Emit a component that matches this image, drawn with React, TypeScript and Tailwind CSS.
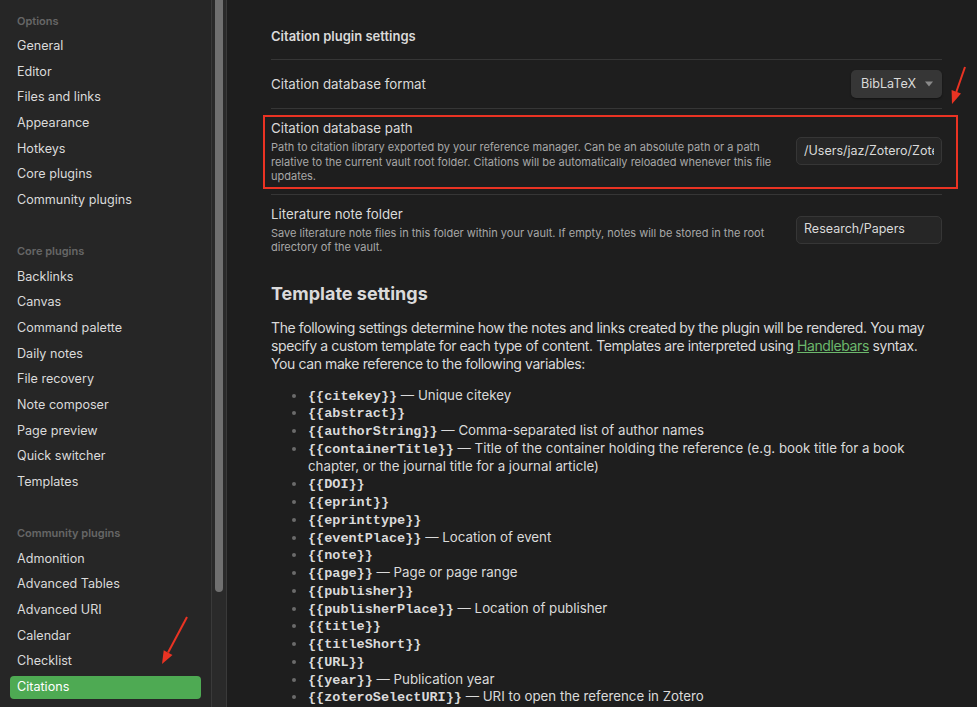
import React from "react";

const font = "font-['Inter','Noto_Sans',sans-serif]";

const sections = [
  {
    title: "Options",
    items: ["General", "Editor", "Files and links", "Appearance", "Hotkeys", "Core plugins", "Community plugins"],
  },
  {
    title: "Core plugins",
    items: ["Backlinks", "Canvas", "Command palette", "Daily notes", "File recovery", "Note composer", "Page preview", "Quick switcher", "Templates"],
  },
  {
    title: "Community plugins",
    items: ["Admonition", "Advanced Tables", "Advanced URI", "Calendar", "Checklist", "Citations"],
  },
];

const variables: [string, string?][] = [
  ["citekey", "Unique citekey"],
  ["abstract"],
  ["authorString", "Comma-separated list of author names"],
  ["containerTitle", "Title of the container holding the reference (e.g. book title for a book chapter, or the journal title for a journal article)"],
  ["DOI"],
  ["eprint"],
  ["eprinttype"],
  ["eventPlace", "Location of event"],
  ["note"],
  ["page", "Page or page range"],
  ["publisher"],
  ["publisherPlace", "Location of publisher"],
  ["title"],
  ["titleShort"],
  ["URL"],
  ["year", "Publication year"],
  ["zoteroSelectURI", "URI to open the reference in Zotero"],
];

function Sidebar() {
  return (
    <div className="w-[211px] shrink-0 bg-[#262626] px-[10px] pt-[8px]">
      {sections.map((section, i) => (
        <div key={section.title} className={i > 0 ? "mt-[25.65px]" : ""}>
          <div className="h-[25.65px] flex items-center pl-[7px] text-[11px] font-semibold text-[#666666]">
            {section.title}
          </div>
          {section.items.map((item) => (
            <div key={item} className="h-[25.65px] py-[1.3px]">
              <div
                className={
                  item === "Citations"
                    ? "h-full flex items-center pl-[7px] rounded-[4px] bg-[#4eaa53] text-white text-[12.6px]"
                    : "h-full flex items-center pl-[7px] text-[12.6px] text-[#dadada]"
                }
              >
                {item}
              </div>
            </div>
          ))}
        </div>
      ))}
    </div>
  );
}

function Scrollbar() {
  return (
    <div className="w-[16px] shrink-0 bg-[#2a2a2a] border-l border-r border-[#3a3a3a] mr-[1px]">
      <div className="ml-[3px] w-[8px] h-[592px] rounded-b-full bg-[#707070]" />
    </div>
  );
}

function SettingRow({
  title,
  desc,
  children,
  border = true,
}: {
  title: string;
  desc?: string;
  children: React.ReactNode;
  border?: boolean;
}) {
  return (
    <div className={`flex items-center py-[10px] ${border ? "border-b border-[#363636]" : ""}`}>
      <div className="flex-1 pr-[24px]">
        <div className="text-[13.3px] leading-[18px] text-[#dadada]">{title}</div>
        {desc && (
          <div className="mt-[3px] text-[11px] leading-[14.5px] text-[#a8a8a8]">{desc}</div>
        )}
      </div>
      {children}
    </div>
  );
}

function TextInput({ value }: { value: string }) {
  return (
    <div className="w-[146px] h-[28px] shrink-0 flex items-center px-[7px] rounded-[5px] bg-[#262626] border border-[#363636] text-[12.5px] text-[#dadada]">
      <span className="block w-full whitespace-nowrap overflow-hidden">{value}</span>
    </div>
  );
}

export default function App() {
  return (
    <div className={`relative w-[977px] h-[707px] flex overflow-hidden bg-[#1e1e1e] ${font}`}>
      <Sidebar />
      <Scrollbar />

      <div className="flex-1 pl-[43px] pr-[35px]">
        <div className="pt-[27px] pb-[14px] leading-[18px] text-[13px] font-semibold text-[#dadada] border-b border-[#363636]">
          Citation plugin settings
        </div>

        <SettingRow title="Citation database format">
          <div className="w-[91px] h-[28px] shrink-0 flex items-center justify-between pl-[10px] pr-[8px] rounded-[5px] bg-[#363636] shadow-[0_1px_2px_rgba(0,0,0,0.4)] text-[12.6px] text-[#dadada]">
            BibLaTeX
            <svg width="10" height="6" viewBox="0 0 10 6">
              <path d="M1 0.5 L9 0.5 L5 5.5 Z" fill="#8a8a8a" />
            </svg>
          </div>
        </SettingRow>

        <SettingRow
          title="Citation database path"
          desc="Path to citation library exported by your reference manager. Can be an absolute path or a path relative to the current vault root folder. Citations will be automatically reloaded whenever this file updates."
        >
          <TextInput value="/Users/jaz/Zotero/Zotero.bib" />
        </SettingRow>

        <SettingRow
          title="Literature note folder"
          desc="Save literature note files in this folder within your vault. If empty, notes will be stored in the root directory of the vault."
          border={false}
        >
          <TextInput value="Research/Papers" />
        </SettingRow>

        <h2 className="mt-[17px] text-[18px] leading-[24px] font-bold text-[#dadada]">
          Template settings
        </h2>

        <p className="mt-[13px] text-[14px] tracking-[-0.4px] leading-[18px] text-[#dadada]">
          The following settings determine how the notes and links created by the plugin will be rendered. You may
          specify a custom template for each type of content. Templates are interpreted using{" "}
          <span className="text-[#6cb86c] underline">Handlebars</span> syntax. You can make reference to the
          following variables:
        </p>

        <ul className="mt-[14px] pl-[21px]">
          {variables.map(([name, desc]) => (
            <li key={name} className="flex text-[13.3px] leading-[17.75px] text-[#dadada]">
              <span className="w-[16px] shrink-0 flex items-start pt-[7px]">
                <span className="w-[4px] h-[4px] rounded-full bg-[#6b6b6b]" />
              </span>
              <span>
                <code className="font-['Liberation_Mono',monospace] font-bold text-[13.5px] leading-none">
                  {"{{" + name + "}}"}
                </code>
                {desc && <> — {desc}</>}
              </span>
            </li>
          ))}
        </ul>
      </div>

      <div className="absolute left-[263px] top-[115px] w-[695px] h-[74px] border-2 border-[#ea3323] pointer-events-none" />

      <svg className="absolute inset-0 pointer-events-none" width="977" height="707" viewBox="0 0 977 707">
        <line x1="965" y1="67" x2="956.3" y2="92" stroke="#ea3323" strokeWidth="2" />
        <polygon points="952,104 961,93.5 951.6,90.1" fill="#ea3323" />
        <line x1="187" y1="617" x2="168.1" y2="652.5" stroke="#ea3323" strokeWidth="2" />
        <polygon points="162,664 172.5,654.9 163.7,650.2" fill="#ea3323" />
      </svg>
    </div>
  );
}
